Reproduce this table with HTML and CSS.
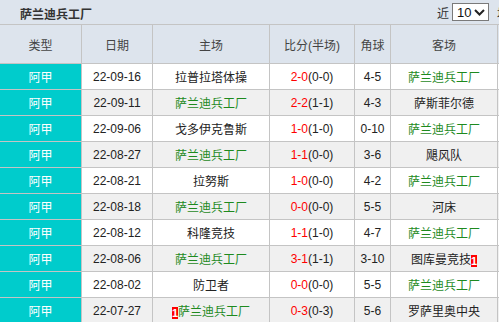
FILE: index.html
```html
<!DOCTYPE html>
<html lang="zh">
<head>
<meta charset="utf-8">
<title>萨兰迪兵工厂</title>
<link rel="stylesheet" href="styles.css">
</head>
<body>
<div class="page">
  <div class="bar">
    <span class="title">萨兰迪兵工厂</span>
    <div class="count">
      <span>近</span>
      <span class="sel"><span class="sel-val">10</span><svg class="chev" width="11" height="7" viewBox="0 0 11 7"><path d="M1 1 L5.5 5.5 L10 1" fill="none" stroke="#222" stroke-width="2"/></svg></span>
      <span class="unit">场</span>
    </div>
  </div>
  <table class="matches">
    <colgroup>
      <col class="c-type"><col class="c-date"><col class="c-home"><col class="c-score"><col class="c-corner"><col class="c-away"><col class="c-extra">
    </colgroup>
    <thead>
      <tr><th>类型</th><th>日期</th><th>主场</th><th>比分(半场)</th><th>角球</th><th>客场</th><th></th></tr>
    </thead>
    <tbody>
      <tr><td class="type">阿甲</td><td>22-09-16</td><td>拉普拉塔体操</td><td><span class="ft">2-0</span>(0-0)</td><td>4-5</td><td class="team">萨兰迪兵工厂</td><td></td></tr>
      <tr><td class="type">阿甲</td><td>22-09-11</td><td class="team">萨兰迪兵工厂</td><td><span class="ft">2-2</span>(1-1)</td><td>4-3</td><td>萨斯菲尔德</td><td></td></tr>
      <tr><td class="type">阿甲</td><td>22-09-06</td><td>戈多伊克鲁斯</td><td><span class="ft">1-0</span>(1-0)</td><td>0-10</td><td class="team">萨兰迪兵工厂</td><td></td></tr>
      <tr><td class="type">阿甲</td><td>22-08-27</td><td class="team">萨兰迪兵工厂</td><td><span class="ft">1-1</span>(0-0)</td><td>3-6</td><td>飓风队</td><td></td></tr>
      <tr><td class="type">阿甲</td><td>22-08-21</td><td>拉努斯</td><td><span class="ft">1-0</span>(0-0)</td><td>4-2</td><td class="team">萨兰迪兵工厂</td><td></td></tr>
      <tr><td class="type">阿甲</td><td>22-08-18</td><td class="team">萨兰迪兵工厂</td><td><span class="ft">0-0</span>(0-0)</td><td>5-5</td><td>河床</td><td></td></tr>
      <tr><td class="type">阿甲</td><td>22-08-12</td><td>科隆竞技</td><td><span class="ft">1-1</span>(1-0)</td><td>4-7</td><td class="team">萨兰迪兵工厂</td><td></td></tr>
      <tr><td class="type">阿甲</td><td>22-08-06</td><td class="team">萨兰迪兵工厂</td><td><span class="ft">3-1</span>(1-1)</td><td>3-10</td><td>图库曼竞技<span class="card">1</span></td><td></td></tr>
      <tr><td class="type">阿甲</td><td>22-08-02</td><td>防卫者</td><td><span class="ft">0-0</span>(0-0)</td><td>5-5</td><td class="team">萨兰迪兵工厂</td><td></td></tr>
      <tr><td class="type">阿甲</td><td>22-07-27</td><td class="team"><span class="card">1</span>萨兰迪兵工厂</td><td><span class="ft">0-3</span>(0-3)</td><td>5-6</td><td>罗萨里奥中央</td><td></td></tr>
    </tbody>
  </table>
</div>
</body>
</html>
```
FILE: styles.css
```css
html, body {
  margin: 0;
  padding: 0;
  background: #dde4ed;
  overflow: hidden;
}
body {
  font-family: "Liberation Sans", "Noto Sans CJK SC", sans-serif;
  font-size: 12px;
  color: #333;
}
.page {
  width: 598px;
}
.bar {
  height: 24px;
  display: flex;
  align-items: center;
  justify-content: space-between;
  padding: 0 89px 0 20px;
  box-sizing: border-box;
}
.title {
  font-weight: bold;
  color: #333;
  font-size: 12px;
  position: relative;
  top: 1px;
}
.count {
  display: flex;
  align-items: center;
  font-size: 12px;
  color: #333;
}
.sel {
  display: flex;
  align-items: center;
  justify-content: space-between;
  box-sizing: border-box;
  width: 37px;
  height: 18px;
  margin: 0 8px 0 3px;
  padding: 0 3px 0 4px;
  background: #fff;
  border: 1px solid #7a7a7a;
  font-family: "Liberation Sans", sans-serif;
  font-size: 13px;
  color: #111;
}
.chev {
  display: block;
}
.matches {
  border-collapse: separate;
  border-spacing: 0;
  table-layout: fixed;
  width: 598px;
  border-top: 1px solid #c4c4c4;
}
.c-type { width: 82px; }
.c-date { width: 71px; }
.c-home { width: 117px; }
.c-score { width: 85px; }
.c-corner { width: 36px; }
.c-away { width: 107px; }
.c-extra { width: 100px; }
.matches th,
.matches td {
  box-sizing: border-box;
  padding: 0;
  text-align: center;
  white-space: nowrap;
  overflow: hidden;
  border-right: 1px solid #c4c4c4;
  border-bottom: 1px solid #c4c4c4;
}
.matches th {
  height: 39px;
  font-weight: normal;
  color: #444;
  background: #dde4ed;
}
.matches td {
  height: 26px;
  background: #fff;
  color: #222;
}
.matches tbody tr:nth-child(even) td {
  background: #f0f0f0;
}
.matches tbody tr td.type {
  background: #00cccc;
  color: #fff;
}
.matches td.team {
  color: #1e8a1e;
}
.ft {
  color: #f00;
}
.card {
  display: inline-block;
  background: #f00;
  color: #fff;
  font-weight: bold;
  font-size: 11px;
  line-height: 12px;
  width: 6px;
  text-align: center;
  vertical-align: -1px;
}
```
